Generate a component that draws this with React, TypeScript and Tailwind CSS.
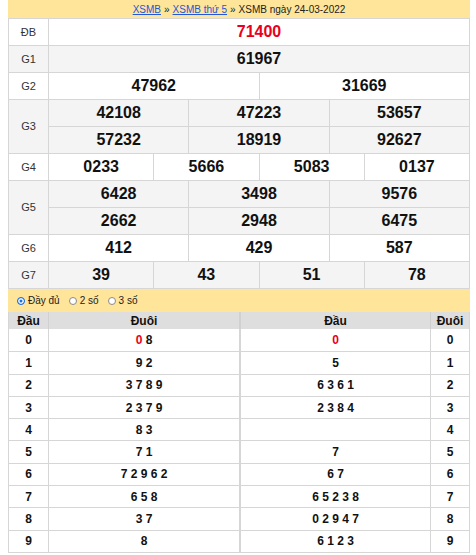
import React from "react";

const font = "font-['Liberation_Sans',Arial,sans-serif]";

type Row = { label: string; lines: string[][]; red?: boolean };

const prizes: Row[] = [
  { label: "ĐB", lines: [["71400"]], red: true },
  { label: "G1", lines: [["61967"]] },
  { label: "G2", lines: [["47962", "31669"]] },
  { label: "G3", lines: [["42108", "47223", "53657"], ["57232", "18919", "92627"]] },
  { label: "G4", lines: [["0233", "5666", "5083", "0137"]] },
  { label: "G5", lines: [["6428", "3498", "9576"], ["2662", "2948", "6475"]] },
  { label: "G6", lines: [["412", "429", "587"]] },
  { label: "G7", lines: [["39", "43", "51", "78"]] },
];

const dau = ["0 8", "9 2", "3 7 8 9", "2 3 7 9", "8 3", "7 1", "7 2 9 6 2", "6 5 8", "3 7", "8"];
const duoi = ["0", "5", "6 3 6 1", "2 3 8 4", "", "7", "6 7", "6 5 2 3 8", "0 2 9 4 7", "6 1 2 3"];

const Radio = ({ checked, label }: { checked?: boolean; label: string }) => (
  <label className="flex items-center gap-[3px] mr-[9px]">
    <span
      className={
        checked
          ? "w-[8px] h-[8px] rounded-full bg-[#1e6fe0] border border-[#1e6fe0] shadow-[inset_0_0_0_1.5px_#fff]"
          : "w-[8px] h-[8px] rounded-full bg-white border border-[#8a8a8a]"
      }
    />
    <span>{label}</span>
  </label>
);

const PrizeRow = ({ row, index }: { row: Row; index: number }) => {
  const bg = index % 2 === 1 ? "bg-[#f4f4f4]" : "bg-white";
  return (
    <div className={`flex border-b border-[#d6d6d6] ${bg}`}>
      <div className="w-[40px] shrink-0 flex items-center justify-center border-r border-[#d6d6d6] text-[11px] text-[#333]">
        {row.label}
      </div>
      <div className="flex-1 flex flex-col">
        {row.lines.map((line, li) => {
          const last = li === row.lines.length - 1;
          return (
            <div key={li} className={last ? "flex h-[26px]" : "flex h-[27px] border-b border-[#d6d6d6]"}>
              {line.map((n, i) => (
                <div
                  key={i}
                  className={`flex-1 flex items-center justify-center text-[16px] font-bold ${
                    row.red ? "text-[#e8001c]" : "text-[#111]"
                  } ${i < line.length - 1 ? "border-r border-[#d6d6d6]" : ""}`}
                >
                  {n}
                </div>
              ))}
            </div>
          );
        })}
      </div>
    </div>
  );
};

export default function App() {
  return (
    <div className={`${font} w-[476px] h-[555px] bg-white pl-[8px]`}>
      <div className="w-[462px]">
        {/* breadcrumb */}
        <div className="h-[18px] bg-[#fee59a] flex items-center justify-center text-[10px] text-[#222]">
          <a className="text-[#2457d6] underline">XSMB</a>
          <span className="mx-[3px]">»</span>
          <a className="text-[#2457d6] underline">XSMB thứ 5</a>
          <span className="mx-[3px]">»</span>
          <span>XSMB ngày 24-03-2022</span>
        </div>

        {/* results */}
        <div className="border-x border-t border-[#d6d6d6]">
          {prizes.map((r, i) => (
            <PrizeRow key={r.label} row={r} index={i} />
          ))}
        </div>

        {/* options */}
        <div className="h-[23px] bg-[#fee59a] flex items-center pl-[9px] text-[10px] text-[#222]">
          <Radio checked label="Đầy đủ" />
          <Radio label="2 số" />
          <Radio label="3 số" />
        </div>

        {/* loto */}
        <div className="border-x border-b border-[#d6d6d6] text-[12px] font-bold text-[#111]">
          <div className="grid grid-cols-[40px_192px_190px_1fr] h-[17px] bg-[#dedede]">
            <div className="flex items-center justify-center border-r border-[#d0d0d0]">Đầu</div>
            <div className="flex items-center justify-center border-r-2 border-[#d0d0d0]">Đuôi</div>
            <div className="flex items-center justify-center border-r border-[#d0d0d0]">Đầu</div>
            <div className="flex items-center justify-center">Đuôi</div>
          </div>
          {dau.map((d, i) => (
            <div
              key={i}
              className={`grid grid-cols-[40px_192px_190px_1fr] h-[22.3px] bg-white ${
                i > 0 ? "border-t border-[#d6d6d6]" : ""
              }`}
            >
              <div className="flex items-center justify-center border-r border-[#d6d6d6]">{i}</div>
              <div className="flex items-center justify-center border-r-2 border-[#d6d6d6] whitespace-pre">
                {i === 0 ? (
                  <>
                    <span className="text-[#e8001c]">0</span> 8
                  </>
                ) : (
                  d
                )}
              </div>
              <div
                className={`flex items-center justify-center border-r border-[#d6d6d6] whitespace-pre ${
                  i === 0 ? "text-[#e8001c]" : ""
                }`}
              >
                {duoi[i]}
              </div>
              <div className="flex items-center justify-center">{i}</div>
            </div>
          ))}
        </div>
      </div>
    </div>
  );
}
